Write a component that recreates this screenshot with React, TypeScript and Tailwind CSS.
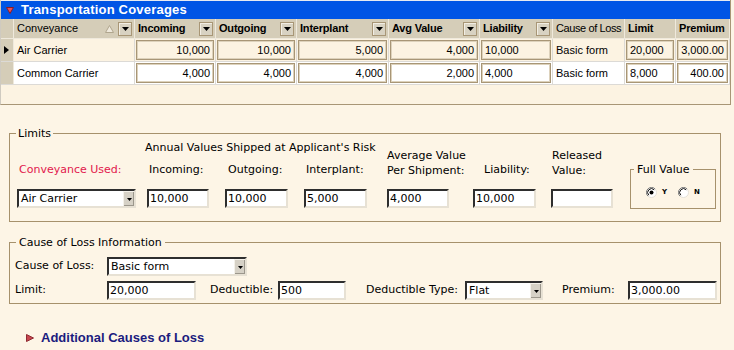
import React from 'react';

const GRID_FONT = "font-['Liberation_Sans',Arial,sans-serif]";
const FORM_FONT = "font-['DejaVu_Sans',Verdana,sans-serif]";

type Col = { label: string; w: string; bold: boolean; dd: boolean; sort?: boolean; tight?: boolean };
type CellKind = 'text' | 'num' | 'left';

const cols: Col[] = [
  { label: 'Conveyance', w: 'w-[121px]', bold: false, dd: true, sort: true },
  { label: 'Incoming', w: 'w-[81px]', bold: true, dd: true },
  { label: 'Outgoing', w: 'w-[81px]', bold: true, dd: true },
  { label: 'Interplant', w: 'w-[92px]', bold: true, dd: true },
  { label: 'Avg Value', w: 'w-[91px]', bold: true, dd: true },
  { label: 'Liability', w: 'w-[73px]', bold: true, dd: true },
  { label: 'Cause of Loss', w: 'w-[72px]', bold: false, dd: false, tight: true },
  { label: 'Limit', w: 'w-[51px]', bold: true, dd: false },
  { label: 'Premium', w: 'w-[54px]', bold: true, dd: false },
];

const kinds: CellKind[] = ['text', 'num', 'num', 'num', 'num', 'left', 'text', 'left', 'num'];

const rows = [
  ['Air Carrier', '10,000', '10,000', '5,000', '4,000', '10,000', 'Basic form', '20,000', '3,000.00'],
  ['Common Carrier', '4,000', '4,000', '4,000', '2,000', '4,000', 'Basic form', '8,000', '400.00'],
];

function DropButton() {
  return (
    <div className="flex h-[14px] w-[14px] shrink-0 items-center justify-center border border-[#a89676] bg-[#d8d2c2] shadow-[inset_1px_1px_0_#f2eee4]">
      <svg width="7" height="4" viewBox="0 0 7 4">
        <polygon points="0,0 7,0 3.5,4" fill="#000" />
      </svg>
    </div>
  );
}

function HeaderCell({ col }: { col: Col }) {
  return (
    <div className={`${col.w} flex h-full shrink-0 items-center overflow-hidden border-r border-[#efe9dc] pl-[3px] pr-[2px]`}>
      <span
        className={`flex-1 whitespace-nowrap ${col.bold ? 'font-bold tracking-[-0.2px]' : ''} ${
          col.tight ? 'pl-0 tracking-[-0.4px]' : ''
        }`}
      >
        {col.label}
      </span>
      {col.sort ? (
        <svg width="9" height="8" viewBox="0 0 9 8" className="mr-[4px]">
          <polygon points="4.5,0.5 8.5,7.5 0.5,7.5" fill="#efe9dc" stroke="#b0a68e" strokeWidth="1" />
        </svg>
      ) : null}
      {col.dd ? <DropButton /> : null}
    </div>
  );
}

function GridCell({ w, kind, value }: { w: string; kind: CellKind; value: string }) {
  return (
    <div className={`${w} flex h-full shrink-0 items-center border-r border-[#dcdad6]`}>
      {kind === 'text' ? (
        <span className="whitespace-nowrap pl-[3px]">{value}</span>
      ) : (
        <div
          className={`mx-[1px] flex h-[20px] flex-1 items-center border border-[#a89676] shadow-[inset_1px_1px_0_#ddd2bc,inset_-1px_-1px_0_#ddd2bc] ${
            kind === 'num' ? 'justify-end pr-[3px]' : 'pl-[3px]'
          }`}
        >
          {value}
        </div>
      )}
    </div>
  );
}

function Inset({ w, children }: { w: string; children?: React.ReactNode }) {
  return (
    <div
      className={`${w} flex h-[19px] shrink-0 items-center border-2 border-t-[#2e2e2e] border-l-[#2e2e2e] border-r-[#e7e1d4] border-b-[#e7e1d4] bg-white pl-[1px] leading-none`}
    >
      {children}
    </div>
  );
}

function Select({ w, value }: { w: string; value: string }) {
  return (
    <div
      className={`${w} flex h-[19px] shrink-0 items-stretch border-2 border-t-[#2e2e2e] border-l-[#2e2e2e] border-r-[#e7e1d4] border-b-[#e7e1d4] bg-white leading-none`}
    >
      <span className="flex flex-1 items-center pl-[2px]">{value}</span>
      <div className="flex w-[11px] items-center justify-center border-l border-t border-[#f4f1ea] bg-[#d6d1c6] shadow-[inset_-1px_-1px_0_#9c978c]">
        <svg width="5" height="3" viewBox="0 0 5 3">
          <polygon points="0,0 5,0 2.5,3" fill="#000" />
        </svg>
      </div>
    </div>
  );
}

function Radio({ checked }: { checked: boolean }) {
  return (
    <svg width="11" height="11" viewBox="0 0 11 11">
      <circle cx="5.5" cy="5.5" r="5" fill="#fff" stroke="#e4e0d8" />
      <path d="M1.9 9.1 A5 5 0 0 1 9.1 1.9" fill="none" stroke="#7c7c7c" strokeWidth="1" />
      <path d="M2.8 8.2 A3.8 3.8 0 0 1 8.2 2.8" fill="none" stroke="#111" strokeWidth="1" />
      {checked ? <circle cx="5.5" cy="5.5" r="2" fill="#000" /> : null}
    </svg>
  );
}

export default function App() {
  return (
    <div className="h-[350px] w-[734px] overflow-hidden bg-[#fdf5e6] text-black">
      <div className={`${GRID_FONT} w-[731px] border-b border-l border-r border-b-[#a89676] border-l-[#cfcac0] border-r-[#a89676] text-[11px]`}>
        <div className="flex h-[19px] items-center border-t border-[#e6eaf2] bg-[#0055e5] pl-[5px]">
          <svg width="8" height="7" viewBox="0 0 8 7">
            <polygon points="0.5,0.5 7.5,0.5 4,6.5" fill="#e8505a" stroke="#8a1c24" strokeWidth="1" />
          </svg>
          <span className="ml-[7px] text-[13px] font-bold tracking-[0.2px] text-white">Transportation Coverages</span>
        </div>

        <div className="flex h-[20px] border-b border-[#efe9dc] bg-[#d5cdb8]">
          <div className="h-full w-[13px] shrink-0 border-r border-[#efe9dc]" />
          {cols.map((col) => (
            <HeaderCell key={col.label} col={col} />
          ))}
        </div>

        {rows.map((row, i) => (
          <div key={row[0]} className={`flex h-[23px] border-b border-[#dcdad6] ${i === 0 ? 'bg-[#fcf3e2]' : 'bg-white'}`}>
            <div className="flex h-full w-[13px] shrink-0 items-center border-r border-[#efe9dc] bg-[#d5cdb8] pl-[3px]">
              {i === 0 ? (
                <svg width="5" height="8" viewBox="0 0 5 8">
                  <polygon points="0,0 5,4 0,8" fill="#000" />
                </svg>
              ) : null}
            </div>
            {row.map((value, j) => (
              <GridCell key={j} w={cols[j].w} kind={kinds[j]} value={value} />
            ))}
          </div>
        ))}
        <div className="h-[19px] bg-[#fcf3e2]" />
      </div>

      <div className={`${FORM_FONT} text-[11px]`}>
        <fieldset className="ml-[9px] mt-[22px] w-[712px] border border-[#a6916c]">
          <legend className="ml-[6px] px-[2px] leading-[13px]">Limits</legend>
          <div className="flex items-end pb-[13px] pl-[7px] pt-[1px]">
            <div className="flex w-[130px] shrink-0 flex-col">
              <span className="pl-[2px] leading-[15px] text-[#e2184c]">Conveyance Used:</span>
              <div className="mt-[12px]">
                <Select w="w-[119px]" value="Air Carrier" />
              </div>
            </div>

            <div className="flex shrink-0 flex-col">
              <span className="-ml-[2px] whitespace-nowrap leading-[14px]">Annual Values Shipped at Applicant's Risk</span>
              <div className="mt-[7px] flex">
                <div className="flex w-[78px] shrink-0 flex-col">
                  <span className="pl-[2px] leading-[15px]">Incoming:</span>
                  <div className="mt-[12px]">
                    <Inset w="w-[62px]">10,000</Inset>
                  </div>
                </div>
                <div className="flex w-[79px] shrink-0 flex-col">
                  <span className="pl-[3px] leading-[15px]">Outgoing:</span>
                  <div className="mt-[12px]">
                    <Inset w="w-[63px]">10,000</Inset>
                  </div>
                </div>
                <div className="flex w-[83px] shrink-0 flex-col">
                  <span className="pl-[2px] leading-[15px]">Interplant:</span>
                  <div className="mt-[12px]">
                    <Inset w="w-[63px]">5,000</Inset>
                  </div>
                </div>
              </div>
            </div>

            <div className="flex w-[86px] shrink-0 flex-col">
              <span className="leading-[15px]">
                Average Value
                <br />
                Per Shipment:
              </span>
              <div className="mt-[11px]">
                <Inset w="w-[62px]">4,000</Inset>
              </div>
            </div>

            <div className="flex w-[78px] shrink-0 flex-col">
              <span className="pl-[11px] leading-[15px]">Liability:</span>
              <div className="mt-[12px]">
                <Inset w="w-[63px]">10,000</Inset>
              </div>
            </div>

            <div className="flex w-[79px] shrink-0 flex-col">
              <span className="pl-[1px] leading-[15px]">
                Released
                <br />
                Value:
              </span>
              <div className="mt-[11px]">
                <Inset w="w-[62px]" />
              </div>
            </div>

            <fieldset className="-mb-[1px] w-[86px] shrink-0 border border-[#a6916c]">
              <legend className="ml-[3px] px-[3px] leading-[13px]">Full Value</legend>
              <div className="flex items-center pb-[10px] pl-[15px] pt-[11px] text-[7px] font-bold leading-none">
                <Radio checked />
                <span className="ml-[5px]">Y</span>
                <span className="ml-[11px]">
                  <Radio checked={false} />
                </span>
                <span className="ml-[5px]">N</span>
              </div>
            </fieldset>
          </div>
        </fieldset>

        <fieldset className="ml-[9px] mt-[14px] w-[712px] border border-[#a6916c]">
          <legend className="ml-[6px] px-[3px] leading-[13px]">Cause of Loss Information</legend>
          <div className="flex flex-col gap-[5px] pb-[3px] pl-[5px] pt-[8px]">
            <div className="flex h-[19px] items-center">
              <span className="w-[92px] shrink-0">Cause of Loss:</span>
              <Select w="w-[140px]" value="Basic form" />
            </div>
            <div className="flex h-[19px] items-center">
              <span className="w-[92px] shrink-0">Limit:</span>
              <Inset w="w-[89px]">20,000</Inset>
              <span className="w-[82px] shrink-0 pl-[14px]">Deductible:</span>
              <Inset w="w-[68px]">500</Inset>
              <span className="w-[119px] shrink-0 pl-[20px]">Deductible Type:</span>
              <Select w="w-[78px]" value="Flat" />
              <span className="w-[85px] shrink-0 pl-[19px]">Premium:</span>
              <Inset w="w-[89px]">3,000.00</Inset>
            </div>
          </div>
        </fieldset>

        <div className="ml-[26px] mt-[26px] flex items-center">
          <svg width="8" height="8" viewBox="0 0 8 8">
            <polygon points="0.5,0.5 7.5,4 0.5,7.5" fill="#c8464e" stroke="#8e2a32" strokeWidth="1" />
          </svg>
          <span className={`${GRID_FONT} ml-[7px] text-[13px] font-bold leading-[15px] text-[#1b1b7e]`}>
            Additional Causes of Loss
          </span>
        </div>
      </div>
    </div>
  );
}
